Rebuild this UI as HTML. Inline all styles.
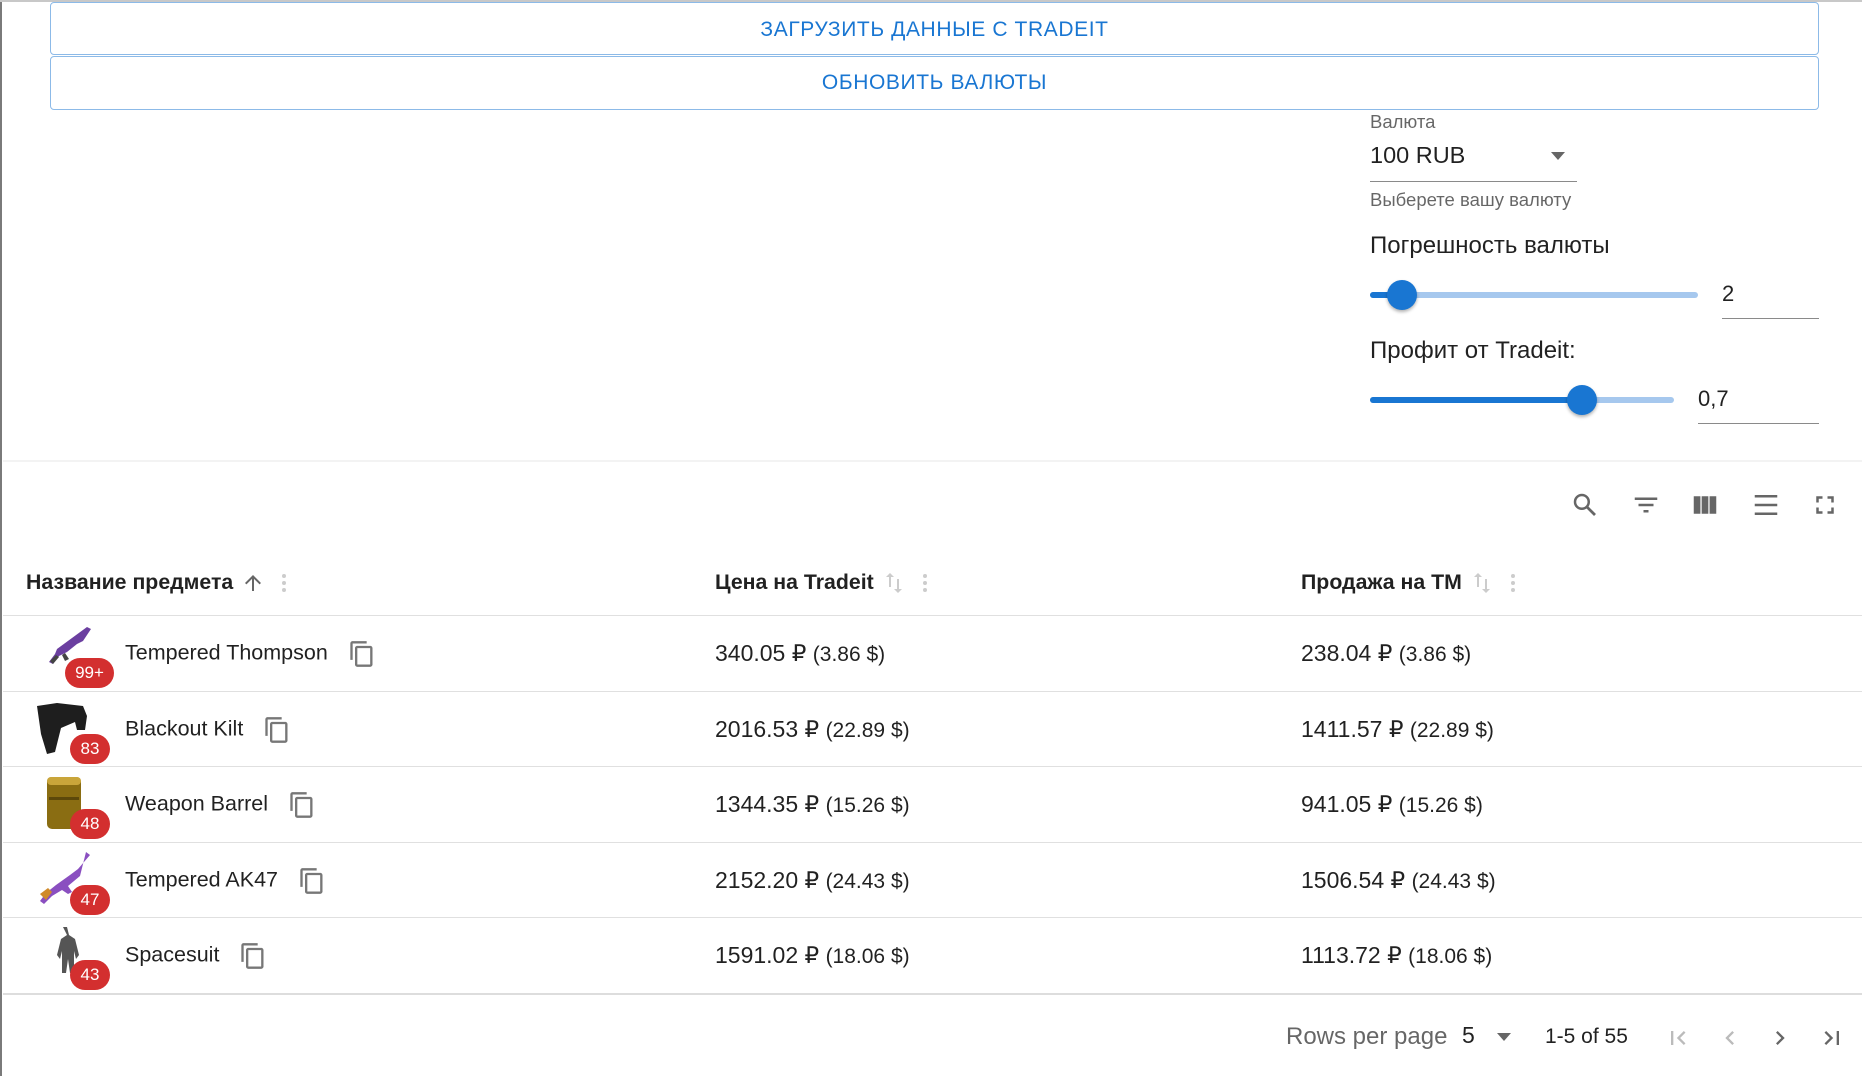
<!DOCTYPE html>
<html><head><meta charset="utf-8"><style>
*{margin:0;padding:0;box-sizing:border-box}
body{width:1862px;height:1076px;background:#fff;font-family:"Liberation Sans",sans-serif;position:relative;overflow:hidden;color:rgba(0,0,0,.87)}
.a{position:absolute}
.btn{position:absolute;left:50px;width:1769px;border:1px solid rgba(25,118,210,.5);border-radius:4px;color:#1976d2;font-size:21px;letter-spacing:.6px;display:flex;align-items:center;justify-content:center}
.ul{position:absolute;height:1px;background:#8a8a8a}
.track{position:absolute;height:6px;border-radius:3px;background:#a6c8ee}
.fill{position:absolute;height:6px;border-radius:3px;background:#1976d2}
.thumb{position:absolute;width:30px;height:30px;border-radius:50%;background:#1976d2;box-shadow:0 2px 3px rgba(0,0,0,.3)}
.row{position:absolute;left:3px;width:1859px;height:1px;background:#e0e0e0}
.cell{position:absolute;font-size:21.5px;color:rgba(0,0,0,.87);white-space:nowrap}
.pr{font-size:23px}
.pr small{font-size:21px}
.badge{position:absolute;height:30px;border-radius:15px;background:#d32f2f;color:#fff;font-size:17px;display:flex;align-items:center;justify-content:center}
.hd{position:absolute;font-size:21.3px;font-weight:bold;color:rgba(0,0,0,.87);top:570px;white-space:nowrap;display:flex;align-items:center}
.hd svg{margin-left:8px}
.copy{display:inline-block;vertical-align:middle;margin-left:20px}
</style></head><body>
<div class="a" style="left:0;top:0;width:2px;height:1076px;background:#7a7a7a"></div>
<div class="a" style="left:0;top:0;width:1862px;height:2px;background:#c8c8c8"></div>
<div class="btn" style="top:2px;height:53px;padding-top:3px">ЗАГРУЗИТЬ ДАННЫЕ С TRADEIT</div>
<div class="btn" style="top:56px;height:54px">ОБНОВИТЬ ВАЛЮТЫ</div>

<div class="a" style="left:1370px;top:111px;font-size:18.5px;color:rgba(0,0,0,.6)">Валюта</div>
<div class="a" style="left:1370px;top:142px;font-size:23.5px">100 RUB</div>
<svg class="a" style="left:1550px;top:151px" width="16" height="10"><path d="M1 1h14L8 9z" fill="#666"/></svg>
<div class="ul" style="left:1370px;top:181px;width:207px"></div>
<div class="a" style="left:1370px;top:189px;font-size:18.5px;color:rgba(0,0,0,.6)">Выберете вашу валюту</div>

<div class="a" style="left:1370px;top:232px;font-size:24px">Погрешность валюты</div>
<div class="track" style="left:1370px;top:292px;width:328px"></div>
<div class="fill" style="left:1370px;top:292px;width:32px"></div>
<div class="thumb" style="left:1387px;top:280px"></div>
<div class="a" style="left:1722px;top:281px;font-size:22px">2</div>
<div class="ul" style="left:1722px;top:318px;width:97px"></div>

<div class="a" style="left:1370px;top:337px;font-size:24px">Профит от Tradeit:</div>
<div class="track" style="left:1370px;top:397px;width:304px"></div>
<div class="fill" style="left:1370px;top:397px;width:212px"></div>
<div class="thumb" style="left:1567px;top:385px"></div>
<div class="a" style="left:1698px;top:386px;font-size:22px">0,7</div>
<div class="ul" style="left:1698px;top:423px;width:121px"></div>

<div class="a" style="left:3px;top:460px;width:1859px;height:2px;background:#f3f3f3"></div>

<svg class="a" style="left:1570px;top:490px" width="30" height="30" viewBox="0 0 24 24"><circle cx="9.5" cy="9.5" r="5.5" fill="none" stroke="#666" stroke-width="2"/><path d="M13.5 13.5l6.5 6.5" stroke="#666" stroke-width="2.2"/></svg>
<svg class="a" style="left:1631px;top:490px" width="30" height="30" viewBox="0 0 24 24"><path fill="#666" d="M10 18h4v-2h-4zM3 6v2h18V6zm3 7h12v-2H6z"/></svg>
<svg class="a" style="left:1690px;top:490px" width="30" height="30" viewBox="0 0 24 24"><path fill="#666" d="M14.67 5v14H9.33V5zm1 14H21V5h-5.33zm-7.34 0V5H3v14z"/></svg>
<svg class="a" style="left:1751px;top:490px" width="30" height="30" viewBox="0 0 24 24"><path fill="#666" d="M3 4h18v2H3zm0 7h18v2H3zm0 7h18v2H3z"/></svg>
<svg class="a" style="left:1810px;top:490px" width="30" height="30" viewBox="0 0 24 24"><path fill="#666" d="M7 14H5v5h5v-2H7zm-2-4h2V7h3V5H5zm12 7h-3v2h5v-5h-2zM14 5v2h3v3h2V5z"/></svg>

<div class="hd" style="left:26px">Название предмета<svg width="24" height="24" viewBox="0 0 24 24"><path fill="#666" d="M4 12l1.41 1.41L11 7.83V20h2V7.83l5.58 5.59L20 12l-8-8z"/></svg><svg width="14" height="24" style="margin-left:12px"><circle cx="7" cy="5" r="2" fill="#ccc"/><circle cx="7" cy="12" r="2" fill="#ccc"/><circle cx="7" cy="19" r="2" fill="#ccc"/></svg></div>
<div class="hd" style="left:715px">Цена на Tradeit<svg width="24" height="24" viewBox="0 0 24 24"><path fill="#ccc" d="M8 2l-4 4h3v10h2V6h3zM16 22l4-4h-3V8h-2v10h-3z"/></svg><svg width="14" height="24" style="margin-left:12px"><circle cx="7" cy="5" r="2" fill="#ccc"/><circle cx="7" cy="12" r="2" fill="#ccc"/><circle cx="7" cy="19" r="2" fill="#ccc"/></svg></div>
<div class="hd" style="left:1301px">Продажа на ТМ<svg width="24" height="24" viewBox="0 0 24 24"><path fill="#ccc" d="M8 2l-4 4h3v10h2V6h3zM16 22l4-4h-3V8h-2v10h-3z"/></svg><svg width="14" height="24" style="margin-left:12px"><circle cx="7" cy="5" r="2" fill="#ccc"/><circle cx="7" cy="12" r="2" fill="#ccc"/><circle cx="7" cy="19" r="2" fill="#ccc"/></svg></div>

<div class="row" style="top:615px"></div>
<div class="row" style="top:691px"></div>
<div class="row" style="top:766px"></div>
<div class="row" style="top:842px"></div>
<div class="row" style="top:917px"></div>
<div class="row" style="top:993px;height:2px;background:#ddd"></div>

<svg class="a" style="left:45px;top:623px" width="50" height="48"><path d="M42 4l4 2-8 12-6 3-10 8-8 4-6 8-4-2 6-8 2-5z" fill="#6b3fa0"/><path d="M20 30l4 6-4 2-3-6z" fill="#444"/><path d="M5 38l6-6 3 2-6 7z" fill="#444"/></svg>
<svg class="a" style="left:33px;top:700px" width="58" height="55"><path d="M4 6l20-3 26 3 4 10-2 14-8 0-2-8-14 6-6 24-8 2-6-20z" fill="#1e1e1e"/></svg>
<svg class="a" style="left:45px;top:775px" width="40" height="58"><rect x="2" y="2" width="34" height="52" rx="5" fill="#8a6d12"/><rect x="2" y="2" width="34" height="8" rx="4" fill="#c9a53a"/><rect x="4" y="22" width="30" height="3" fill="#5c480a"/></svg>
<svg class="a" style="left:36px;top:850px" width="58" height="58"><path d="M50 2l4 3-12 14-8 6-14 10-10 8-6 8 4 3 8-8 10-6 6 4 4-2-4-6 12-10z" fill="#8a4fc0"/><path d="M4 44l8-6 4 4-6 8z" fill="#d08a2a"/></svg>
<svg class="a" style="left:48px;top:925px" width="34" height="60"><path d="M15 2h4l2 8 6 4 4 16-3 4-2-8v22h-4l-2-14-2 14h-4V26l-2 8-3-4 4-16 6-4z" fill="#555"/></svg>

<div class="badge" style="left:65px;top:658px;width:49px">99+</div>
<div class="badge" style="left:70px;top:734px;width:40px">83</div>
<div class="badge" style="left:70px;top:809px;width:40px">48</div>
<div class="badge" style="left:70px;top:885px;width:40px">47</div>
<div class="badge" style="left:70px;top:960px;width:40px">43</div>

<svg width="0" height="0" style="position:absolute"><defs><symbol id="cp" viewBox="0 0 24 24"><path fill="#777" d="M16 1H4c-1.1 0-2 .9-2 2v14h2V3h12zm3 4H8c-1.1 0-2 .9-2 2v14c0 1.1.9 2 2 2h11c1.1 0 2-.9 2-2V7c0-1.1-.9-2-2-2m0 16H8V7h11z"/></symbol></defs></svg>

<div class="cell" style="left:125px;top:640px">Tempered Thompson<svg class="copy" width="28" height="28"><use href="#cp"/></svg></div>
<div class="cell" style="left:125px;top:716px">Blackout Kilt<svg class="copy" width="28" height="28"><use href="#cp"/></svg></div>
<div class="cell" style="left:125px;top:791px">Weapon Barrel<svg class="copy" width="28" height="28"><use href="#cp"/></svg></div>
<div class="cell" style="left:125px;top:867px">Tempered AK47<svg class="copy" width="28" height="28"><use href="#cp"/></svg></div>
<div class="cell" style="left:125px;top:942px">Spacesuit<svg class="copy" width="28" height="28"><use href="#cp"/></svg></div>

<div class="cell pr" style="left:715px;top:640px">340.05 ₽ <small>(3.86 $)</small></div>
<div class="cell pr" style="left:715px;top:716px">2016.53 ₽ <small>(22.89 $)</small></div>
<div class="cell pr" style="left:715px;top:791px">1344.35 ₽ <small>(15.26 $)</small></div>
<div class="cell pr" style="left:715px;top:867px">2152.20 ₽ <small>(24.43 $)</small></div>
<div class="cell pr" style="left:715px;top:942px">1591.02 ₽ <small>(18.06 $)</small></div>

<div class="cell pr" style="left:1301px;top:640px">238.04 ₽ <small>(3.86 $)</small></div>
<div class="cell pr" style="left:1301px;top:716px">1411.57 ₽ <small>(22.89 $)</small></div>
<div class="cell pr" style="left:1301px;top:791px">941.05 ₽ <small>(15.26 $)</small></div>
<div class="cell pr" style="left:1301px;top:867px">1506.54 ₽ <small>(24.43 $)</small></div>
<div class="cell pr" style="left:1301px;top:942px">1113.72 ₽ <small>(18.06 $)</small></div>

<div class="a" style="left:1286px;top:1023px;font-size:24px;color:rgba(0,0,0,.6)">Rows per page</div>
<div class="a" style="left:1462px;top:1022px;font-size:23px">5</div>
<svg class="a" style="left:1496px;top:1032px" width="16" height="10"><path d="M1 1h14L8 9z" fill="#666"/></svg>
<div class="a" style="left:1545px;top:1025px;font-size:21px">1-5 of 55</div>
<svg class="a" style="left:1664px;top:1024px" width="28" height="28" viewBox="0 0 24 24"><path fill="#bbb" d="M18.41 16.59L13.82 12l4.59-4.59L17 6l-6 6 6 6zM6 6h2v12H6z"/></svg>
<svg class="a" style="left:1716px;top:1024px" width="28" height="28" viewBox="0 0 24 24"><path fill="#bbb" d="M15.41 16.59L10.83 12l4.58-4.59L14 6l-6 6 6 6z"/></svg>
<svg class="a" style="left:1766px;top:1024px" width="28" height="28" viewBox="0 0 24 24"><path fill="#666" d="M8.59 16.59L13.17 12 8.59 7.41 10 6l6 6-6 6z"/></svg>
<svg class="a" style="left:1818px;top:1024px" width="28" height="28" viewBox="0 0 24 24"><path fill="#666" d="M5.59 7.41L10.18 12l-4.59 4.59L7 18l6-6-6-6zM16 6h2v12h-2z"/></svg>
</body></html>
